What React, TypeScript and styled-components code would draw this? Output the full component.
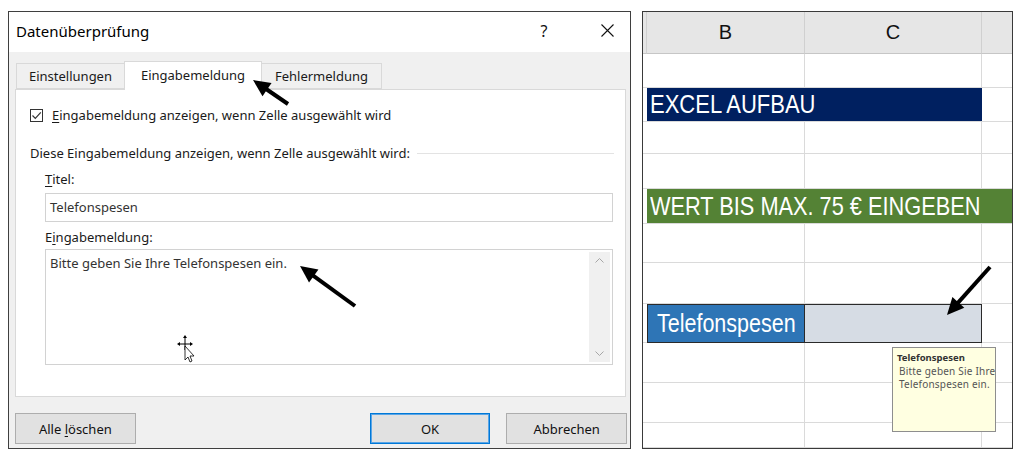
import React from 'react';
import styled, { createGlobalStyle } from 'styled-components';

const GlobalStyle = createGlobalStyle`
  html, body {
    margin: 0;
    padding: 0;
    background: #fff;
  }
  body {
    font-family: "Noto Sans", "Open Sans", sans-serif;
    color: #1a1a1a;
  }
`

const Page = styled.div`
  position: relative;
  width: 1021px;
  height: 458px;
  box-sizing: border-box;
  padding: 11px 0 0 8px;
  display: flex;
  align-items: flex-start;
  gap: 11px;
`

/* ---------- dialog ---------- */

const Dialog = styled.div`
  width: 623px;
  height: 438px;
  box-sizing: border-box;
  border: 1px solid #3f3f3f;
  background: #f0f0f0;
  display: flex;
  flex-direction: column;
`

const TitleBar = styled.div`
  height: 40px;
  flex: none;
  box-sizing: border-box;
  padding: 0 0 3px 7px;
  background: #fff;
  display: flex;
  align-items: center;
`

const Title = styled.div`
  flex: 1;
  font-size: 15px;
  color: #000;
`

const WinButton = styled.div<{ $w: number }>`
  width: ${p => p.$w}px;
  height: 37px;
  display: flex;
  align-items: center;
  justify-content: center;
  font-size: 16px;
  color: #111;
`

const Body = styled.div`
  flex: 1;
  display: flex;
  flex-direction: column;
  padding: 9px 3px 0 6px;
`

const TabRow = styled.div`
  display: flex;
  align-items: flex-end;
  height: 28px;
  margin-left: 2px;
  position: relative;
  z-index: 1;
`

interface TabProps {
  $active?: boolean
  $w: number
}

const Tab = styled.div<TabProps>`
  width: ${p => p.$w}px;
  height: ${p => p.$active ? 29 : 26}px;
  box-sizing: border-box;
  margin-left: -1px;
  margin-bottom: ${p => p.$active ? -1 : 0}px;
  border: 1px solid #d9d9d9;
  border-bottom: ${p => p.$active ? 'none' : '1px solid #d9d9d9'};
  background: ${p => p.$active ? '#fff' : '#f0f0f0'};
  display: flex;
  align-items: center;
  justify-content: center;
  padding-bottom: ${p => p.$active ? 3 : 0}px;
  font-size: 13px;
  color: #1a1a1a;
`

const Panel = styled.div`
  width: 611px;
  height: 308px;
  box-sizing: border-box;
  border: 1px solid #d9d9d9;
  background: #fff;
  display: flex;
  flex-direction: column;
  font-size: 13px;
`

const CheckRow = styled.div`
  display: flex;
  align-items: center;
  height: 18px;
  margin: 16px 0 0 14px;
  gap: 9px;
`

const CheckBox = styled.div`
  width: 13px;
  height: 13px;
  box-sizing: border-box;
  border: 1px solid #333;
  background: #fff;
  display: flex;
  align-items: center;
  justify-content: center;
`

const SectionRow = styled.div`
  display: flex;
  align-items: center;
  height: 18px;
  margin: 20px 11px 0 14px;
  gap: 7px;
  &::after {
    content: '';
    flex: 1;
    height: 1px;
    background: #e3e3e3;
  }
`

const Label = styled.div<{ $top: number }>`
  height: 18px;
  line-height: 18px;
  margin: ${p => p.$top}px 0 0 29px;
`

const Field = styled.div<{ $h: number; $top: number }>`
  width: 568px;
  height: ${p => p.$h}px;
  box-sizing: border-box;
  margin: ${p => p.$top}px 0 0 29px;
  border: 1px solid #d2d2d2;
  display: flex;
  align-items: flex-start;
  color: #333;
`

const FieldText = styled.div<{ $pt: number }>`
  flex: 1;
  padding: ${p => p.$pt}px 0 0 4px;
  line-height: 18px;
`

const ScrollBar = styled.div`
  width: 21px;
  align-self: stretch;
  margin: 2px 2px 2px 0;
  background: #f0f0f0;
  display: flex;
  flex-direction: column;
  justify-content: space-between;
  align-items: center;
  padding: 6px 0;
  box-sizing: border-box;
`

const Key = styled.span`
  text-decoration: underline;
  text-underline-offset: 2px;
`

const ButtonRow = styled.div`
  display: flex;
  margin-top: 16px;
`

const Button = styled.div<{ $primary?: boolean; $gap?: number }>`
  width: 121px;
  height: 31px;
  box-sizing: border-box;
  margin-left: ${p => p.$gap ?? 0}px;
  background: #e1e1e1;
  border: 1px solid ${p => p.$primary ? '#0078d7' : '#adadad'};
  box-shadow: ${p => p.$primary ? 'inset 0 0 0 1px #5aa5e6' : 'none'};
  display: flex;
  align-items: center;
  justify-content: center;
  font-size: 13px;
  color: #111;
`

/* ---------- spreadsheet ---------- */

const Sheet = styled.div`
  width: 371px;
  height: 438px;
  box-sizing: border-box;
  border: 1px solid #3a3a3a;
  display: grid;
  grid-template-columns: 4px 158px 177px 1fr;
  grid-template-rows: 42px 34px 34px 32px 35px 35px 39px 41px 39px 40px 40px 1fr;
  font-family: "Liberation Sans", Arial, sans-serif;
  overflow: hidden;
`

const HeadCell = styled.div<{ $last?: boolean }>`
  background: #e6e6e6;
  border-bottom: 1px solid #c6c6c6;
  border-right: ${p => p.$last ? 'none' : '1px solid #d0d0d0'};
  display: flex;
  align-items: center;
  justify-content: center;
  font-size: 20px;
  color: #111;
`

const Cell = styled.div<{ $last?: boolean; $open?: boolean }>`
  border-bottom: ${p => p.$open ? 'none' : '1px solid #dadada'};
  border-right: ${p => p.$last ? 'none' : '1px solid #dadada'};
`

const Stub = styled.div<{ $open?: boolean }>`
  border-bottom: ${p => p.$open ? 'none' : '1px solid #dadada'};
`

interface BandProps {
  $bg: string
  $span: string
}

const Band = styled.div<BandProps>`
  grid-column: ${p => p.$span};
  background: ${p => p.$bg};
  border-bottom: 1px solid #dadada;
  color: #fff;
  font-size: 25px;
  display: flex;
  align-items: center;
  padding-left: 3px;
  white-space: nowrap;
  overflow: hidden;
`

/* the sheet uses a narrow font; stretch Liberation Sans to its width */
const Narrow = styled.span<{ $sx: number }>`
  display: inline-block;
  transform: scaleX(${p => p.$sx});
  transform-origin: left center;
`

const LabelCell = styled.div`
  background: #2e75b6;
  box-shadow: inset 1px 1px 0 #2a2a2a;
  border-right: 1px solid #2a2a2a;
  border-bottom: 1px solid #2a2a2a;
  color: #fff;
  font-size: 25px;
  display: flex;
  align-items: center;
  padding-left: 10px;
  white-space: nowrap;
  overflow: hidden;
`

const InputCell = styled.div`
  background: #d6dce4;
  box-shadow: inset 0 1px 0 #2a2a2a;
  border-right: 1px solid #2a2a2a;
  border-bottom: 1px solid #2a2a2a;
`

const Tooltip = styled.div`
  position: absolute;
  left: 892px;
  top: 347px;
  width: 104px;
  height: 85px;
  box-sizing: border-box;
  border: 1px solid #8e8e8e;
  background: #ffffe1;
  padding: 3px 4px;
  font-family: "Noto Sans", "Open Sans", sans-serif;
  color: #555;
  white-space: nowrap;
`

const TipTitle = styled.div`
  font-size: 9.5px;
  line-height: 13px;
  font-weight: bold;
  color: #333;
`

const TipText = styled.div`
  margin-top: 1px;
  padding-left: 2px;
  font-size: 10px;
  letter-spacing: 0.2px;
  line-height: 12.5px;
`

const Overlay = styled.svg`
  position: absolute;
  left: 0;
  top: 0;
  z-index: 10;
  pointer-events: none;
`

/* ---------- drawings ---------- */

function Arrow({ tip, tail }: { tip: [number, number]; tail: [number, number] }) {
  const dx = tip[0] - tail[0];
  const dy = tip[1] - tail[1];
  const len = Math.hypot(dx, dy);
  const ux = dx / len, uy = dy / len;
  const headLen = 17, headW = 8;
  const bx = tip[0] - ux * headLen, by = tip[1] - uy * headLen;
  const px = -uy * headW, py = ux * headW;
  return <g>
    <line x1={tail[0]} y1={tail[1]} x2={bx + ux * 2} y2={by + uy * 2} stroke="#000" strokeWidth={4} />
    <polygon points={`${tip[0]},${tip[1]} ${bx + px},${by + py} ${bx - px},${by - py}`} fill="#000" />
  </g>;
}

function MoveCursor() {
  return <g>
    <line x1={179} y1={344} x2={191} y2={344} stroke="#000" strokeWidth={1} />
    <line x1={185} y1={337} x2={185} y2={350} stroke="#000" strokeWidth={1} />
    <polygon points="185,335 183,338 187,338" fill="#000" />
    <polygon points="177,344 180,342 180,346" fill="#000" />
    <polygon points="193,344 190,342 190,346" fill="#000" />
    <polygon points="185,346 194,356 190,356 192,361 190,362 188,357 185,360" fill="#fff" stroke="#000" strokeWidth={0.8} />
  </g>;
}

export default function App() {
  return <Page>
    <GlobalStyle />
    <Dialog>
      <TitleBar>
        <Title>Datenüberprüfung</Title>
        <WinButton $w={80}>?</WinButton>
        <WinButton $w={46}>
          <svg width="13" height="13" viewBox="0 0 13 13">
            <path d="M0.5 0.5 L12.5 12.5 M12.5 0.5 L0.5 12.5" stroke="#111" strokeWidth="1.1" />
          </svg>
        </WinButton>
      </TitleBar>
      <Body>
        <TabRow>
          <Tab $w={109}>Einstellungen</Tab>
          <Tab $w={138} $active>Eingabemeldung</Tab>
          <Tab $w={121}>Fehlermeldung</Tab>
        </TabRow>
        <Panel>
          <CheckRow>
            <CheckBox>
              <svg width="11" height="11" viewBox="0 0 11 11">
                <path d="M1.5 5.5 L4.3 8.3 L9.8 2.3" stroke="#333" strokeWidth="1.2" fill="none" />
              </svg>
            </CheckBox>
            <span><Key>E</Key>ingabemeldung anzeigen, wenn Zelle ausgewählt wird</span>
          </CheckRow>
          <SectionRow>Diese Eingabemeldung anzeigen, wenn Zelle ausgewählt wird:</SectionRow>
          <Label $top={8}><Key>T</Key>itel:</Label>
          <Field $h={29} $top={5}>
            <FieldText $pt={4}>Telefonspesen</FieldText>
          </Field>
          <Label $top={6}>E<Key>i</Key>ngabemeldung:</Label>
          <Field $h={116} $top={3}>
            <FieldText $pt={4}>Bitte geben Sie Ihre Telefonspesen ein.</FieldText>
            <ScrollBar>
              <svg width="9" height="5" viewBox="0 0 9 5">
                <path d="M0.5 4.5 L4.5 0.5 L8.5 4.5" stroke="#a6a6a6" fill="none" />
              </svg>
              <svg width="9" height="5" viewBox="0 0 9 5">
                <path d="M0.5 0.5 L4.5 4.5 L8.5 0.5" stroke="#a6a6a6" fill="none" />
              </svg>
            </ScrollBar>
          </Field>
        </Panel>
        <ButtonRow>
          <Button><span>Alle <Key>l</Key>öschen</span></Button>
          <Button $primary $gap={234}>OK</Button>
          <Button $gap={16}>Abbrechen</Button>
        </ButtonRow>
      </Body>
    </Dialog>

    <Sheet>
      <HeadCell />
      <HeadCell>B</HeadCell>
      <HeadCell>C</HeadCell>
      <HeadCell $last />

      {[1, 2, 3, 4, 5, 6, 7, 8, 9, 10, 11].map(r => {
        if (r === 2) {
          return <React.Fragment key={r}>
            <Stub />
            <Band $bg="#002060" $span="2 / 4"><Narrow $sx={0.88}>EXCEL AUFBAU</Narrow></Band>
            <Cell $last />
          </React.Fragment>;
        }
        if (r === 5) {
          return <React.Fragment key={r}>
            <Stub />
            <Band $bg="#548235" $span="2 / 5"><Narrow $sx={0.87}>WERT BIS MAX. 75 € EINGEBEN</Narrow></Band>
          </React.Fragment>;
        }
        if (r === 8) {
          return <React.Fragment key={r}>
            <Stub />
            <LabelCell><Narrow $sx={0.86}>Telefonspesen</Narrow></LabelCell>
            <InputCell />
            <Cell $last />
          </React.Fragment>;
        }
        return <React.Fragment key={r}>
          <Stub />
          <Cell />
          <Cell />
          <Cell $last />
        </React.Fragment>;
      })}
      <Stub $open />
      <Cell $open />
      <Cell $open />
      <Cell $last $open />
    </Sheet>

    <Tooltip>
      <TipTitle>Telefonspesen</TipTitle>
      <TipText>Bitte geben Sie Ihre<br />Telefonspesen ein.</TipText>
    </Tooltip>

    <Overlay width={1021} height={458} viewBox="0 0 1021 458">
      <Arrow tip={[253, 80]} tail={[288, 104]} />
      <Arrow tip={[300, 266]} tail={[355, 306]} />
      <Arrow tip={[947, 315]} tail={[990, 267]} />
      <MoveCursor />
    </Overlay>
  </Page>;
}
